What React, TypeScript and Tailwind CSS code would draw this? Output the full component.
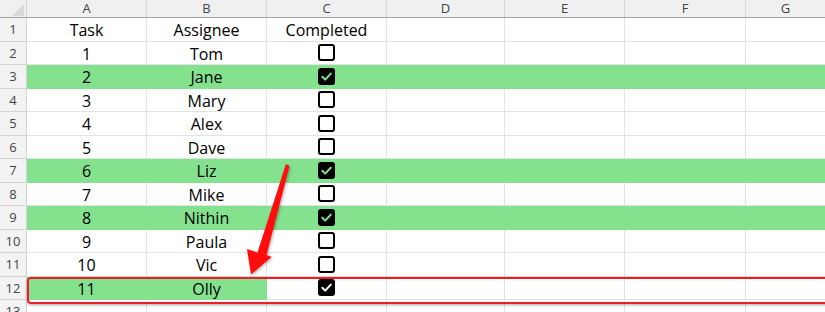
import React from "react";

type Row = {
  task: string;
  name: string;
  done: boolean;
  fill: "all" | "ab" | "none";
};

const rows: Row[] = [
  { task: "1", name: "Tom", done: false, fill: "none" },
  { task: "2", name: "Jane", done: true, fill: "all" },
  { task: "3", name: "Mary", done: false, fill: "none" },
  { task: "4", name: "Alex", done: false, fill: "none" },
  { task: "5", name: "Dave", done: false, fill: "none" },
  { task: "6", name: "Liz", done: true, fill: "all" },
  { task: "7", name: "Mike", done: false, fill: "none" },
  { task: "8", name: "Nithin", done: true, fill: "all" },
  { task: "9", name: "Paula", done: false, fill: "none" },
  { task: "10", name: "Vic", done: false, fill: "none" },
  { task: "11", name: "Olly", done: true, fill: "ab" },
];

const GREEN = "#84e28e";

function Checkbox({ checked, bg }: { checked: boolean; bg: string }) {
  if (!checked) {
    return <span className="block h-[17px] w-[17px] rounded-[3px] border-2 border-black bg-white" />;
  }
  return (
    <span className="flex h-[17px] w-[17px] items-center justify-center rounded-[3px] bg-black">
      <svg width="17" height="17" viewBox="0 0 17 17">
        <path d="M4.3 8.8 L7.2 11.6 L12.8 5.6" fill="none" stroke={bg} strokeWidth="2" strokeLinecap="round" strokeLinejoin="round" />
      </svg>
    </span>
  );
}

function RowHead({ n }: { n: string }) {
  return (
    <div className="flex w-[27px] shrink-0 items-center justify-center border-r border-b border-[#d4d4d4] bg-[#f3f3f3] pt-[1px] text-[13px] text-[#444]">
      {n}
    </div>
  );
}

const cellW = ["w-[120px]", "w-[120px]", "w-[120px]", "w-[118px]", "w-[120px]", "w-[121px]"];

export default function App() {
  return (
    <div className="relative h-[312px] w-[825px] overflow-hidden bg-white font-['Open_Sans',sans-serif] text-black">
      {/* column headers */}
      <div className="flex h-[18px] border-b border-[#a3a3a3] bg-[#f0f0f0] text-[13px] text-[#444]">
        <div className="relative w-[27px] shrink-0 border-r border-[#d4d4d4]">
          <svg className="absolute right-[2px] bottom-[1px]" width="12" height="12" viewBox="0 0 12 12">
            <polygon points="12,0 12,12 0,12" fill="#d9d9d9" />
          </svg>
        </div>
        {["A", "B", "C", "D", "E", "F"].map((l, i) => (
          <div key={l} className={`${cellW[i]} flex shrink-0 items-center justify-center border-r border-[#d9d9d9] leading-none`}>
            {l}
          </div>
        ))}
        <div className="flex flex-1 items-center justify-center leading-none">G</div>
      </div>

      {/* row 1 */}
      <div className="flex h-[23.5px]">
        <RowHead n="1" />
        {["Task", "Assignee", "Completed"].map((t, i) => (
          <div key={t} className={`${cellW[i]} flex shrink-0 items-center justify-center border-r border-b border-[#e3e3e3] pt-[2px] text-[16px]`}>
            {t}
          </div>
        ))}
        {[3, 4, 5].map((i) => (
          <div key={i} className={`${cellW[i]} shrink-0 border-r border-b border-[#e3e3e3]`} />
        ))}
        <div className="flex-1 border-b border-[#e3e3e3]" />
      </div>

      {rows.map((r, idx) => {
        const line = r.fill === "all" ? "border-[#84e28e]" : "border-[#e3e3e3]";
        const abLine = r.fill === "none" ? "border-[#e3e3e3]" : "border-[#84e28e]";
        const abBg = r.fill === "none" ? "bg-white" : "bg-[#84e28e]";
        const restBg = r.fill === "all" ? "bg-[#84e28e]" : "bg-white";
        const checkBg = r.fill === "all" ? GREEN : "#ffffff";
        return (
          <div key={idx} className="flex h-[23.5px]">
            <RowHead n={String(idx + 2)} />
            <div className={`w-[120px] shrink-0 border-r border-b ${abLine} ${abBg} flex items-center justify-center pt-[2px] text-[16px]`}>
              {r.task}
            </div>
            <div className={`w-[120px] shrink-0 border-r border-b ${abLine} ${abBg} flex items-center justify-center pt-[2px] text-[16px]`}>
              {r.name}
            </div>
            <div className={`w-[120px] shrink-0 border-r border-b ${line} ${restBg} flex items-center justify-center`}>
              <Checkbox checked={r.done} bg={checkBg} />
            </div>
            {[3, 4, 5].map((i) => (
              <div key={i} className={`${cellW[i]} shrink-0 border-r border-b ${line} ${restBg}`} />
            ))}
            <div className={`flex-1 border-b ${line} ${restBg}`} />
          </div>
        );
      })}

      {/* row 13 */}
      <div className="flex h-[23.5px]">
        <RowHead n="13" />
        {[0, 1, 2, 3, 4, 5].map((i) => (
          <div key={i} className={`${cellW[i]} shrink-0 border-r border-[#e3e3e3]`} />
        ))}
        <div className="flex-1" />
      </div>

      {/* highlight box around row 12 */}
      <div className="pointer-events-none absolute top-[277px] left-[27px] h-[27px] w-[820px] rounded-[4px] border-2 border-[#ee1c24] shadow-[0_1px_3px_rgba(0,0,0,0.35)]" />

      {/* arrow */}
      <svg className="pointer-events-none absolute top-0 left-0" width="825" height="312" viewBox="0 0 825 312">
        <defs>
          <filter id="sh" x="-50%" y="-50%" width="200%" height="200%">
            <feDropShadow dx="1" dy="1" stdDeviation="1.5" floodColor="#000" floodOpacity="0.35" />
          </filter>
        </defs>
        <polygon
          points="286,164 289.5,166 266.5,255 271.5,257 251,274.5 247,249 257.5,252.5"
          fill="#ff0a0a"
          filter="url(#sh)"
        />
      </svg>
    </div>
  );
}
